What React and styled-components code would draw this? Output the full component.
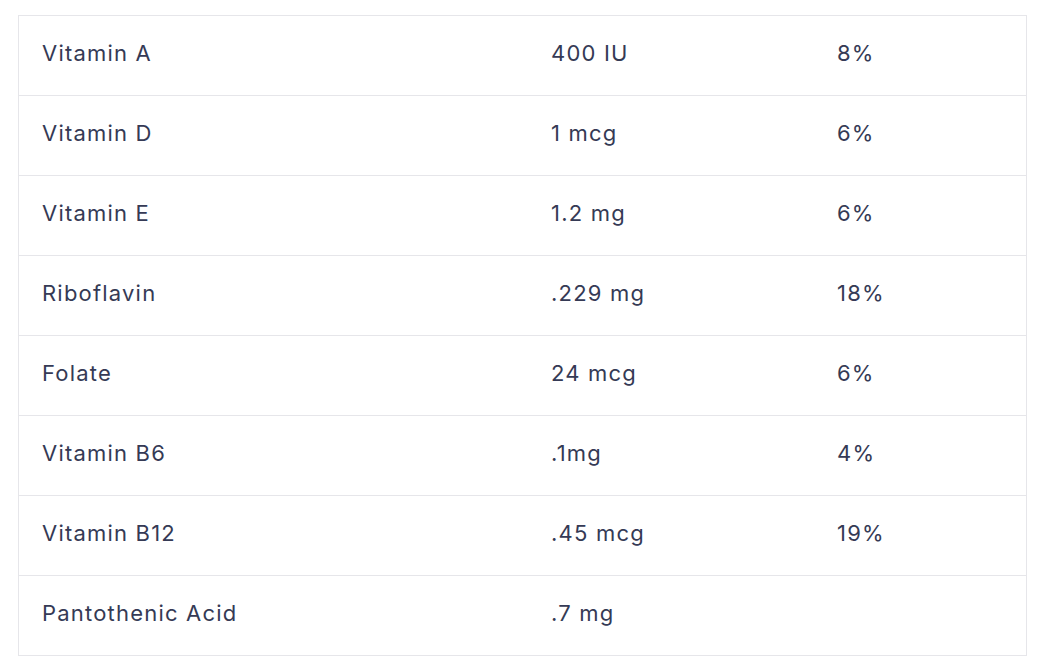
import styled, { createGlobalStyle } from "styled-components";

const GlobalStyle = createGlobalStyle`
  body {
    margin: 0;
    background: #ffffff;
    font-family: Inter, "Noto Sans", "Liberation Sans", sans-serif;
  }
`;

const Page = styled.div`
  padding: 15px 13px 15px 18px;
`;

const Table = styled.div`
  border: 1px solid #e6e6ea;
  border-bottom: none;
`;

const Row = styled.div`
  display: grid;
  grid-template-columns: 509px 286px 1fr;
  height: 79px;
  border-bottom: 1px solid #e6e6ea;
  align-items: center;
`;

const Cell = styled.div`
  padding-left: 23px;
  padding-bottom: 6px;
  font-size: 22px;
  font-weight: 400;
  color: #353a55;
  letter-spacing: 1.2px;
`;

const rows = [
  ["Vitamin A", "400 IU", "8%"],
  ["Vitamin D", "1 mcg", "6%"],
  ["Vitamin E", "1.2 mg", "6%"],
  ["Riboflavin", ".229 mg", "18%"],
  ["Folate", "24 mcg", "6%"],
  ["Vitamin B6", ".1mg", "4%"],
  ["Vitamin B12", ".45 mcg", "19%"],
  ["Pantothenic Acid", ".7 mg", ""],
];

export default function App() {
  return (
    <Page>
      <GlobalStyle />
      <Table>
        {rows.map(([name, amount, pct]) => (
          <Row key={name}>
            <Cell>{name}</Cell>
            <Cell>{amount}</Cell>
            <Cell>{pct}</Cell>
          </Row>
        ))}
      </Table>
    </Page>
  );
}
